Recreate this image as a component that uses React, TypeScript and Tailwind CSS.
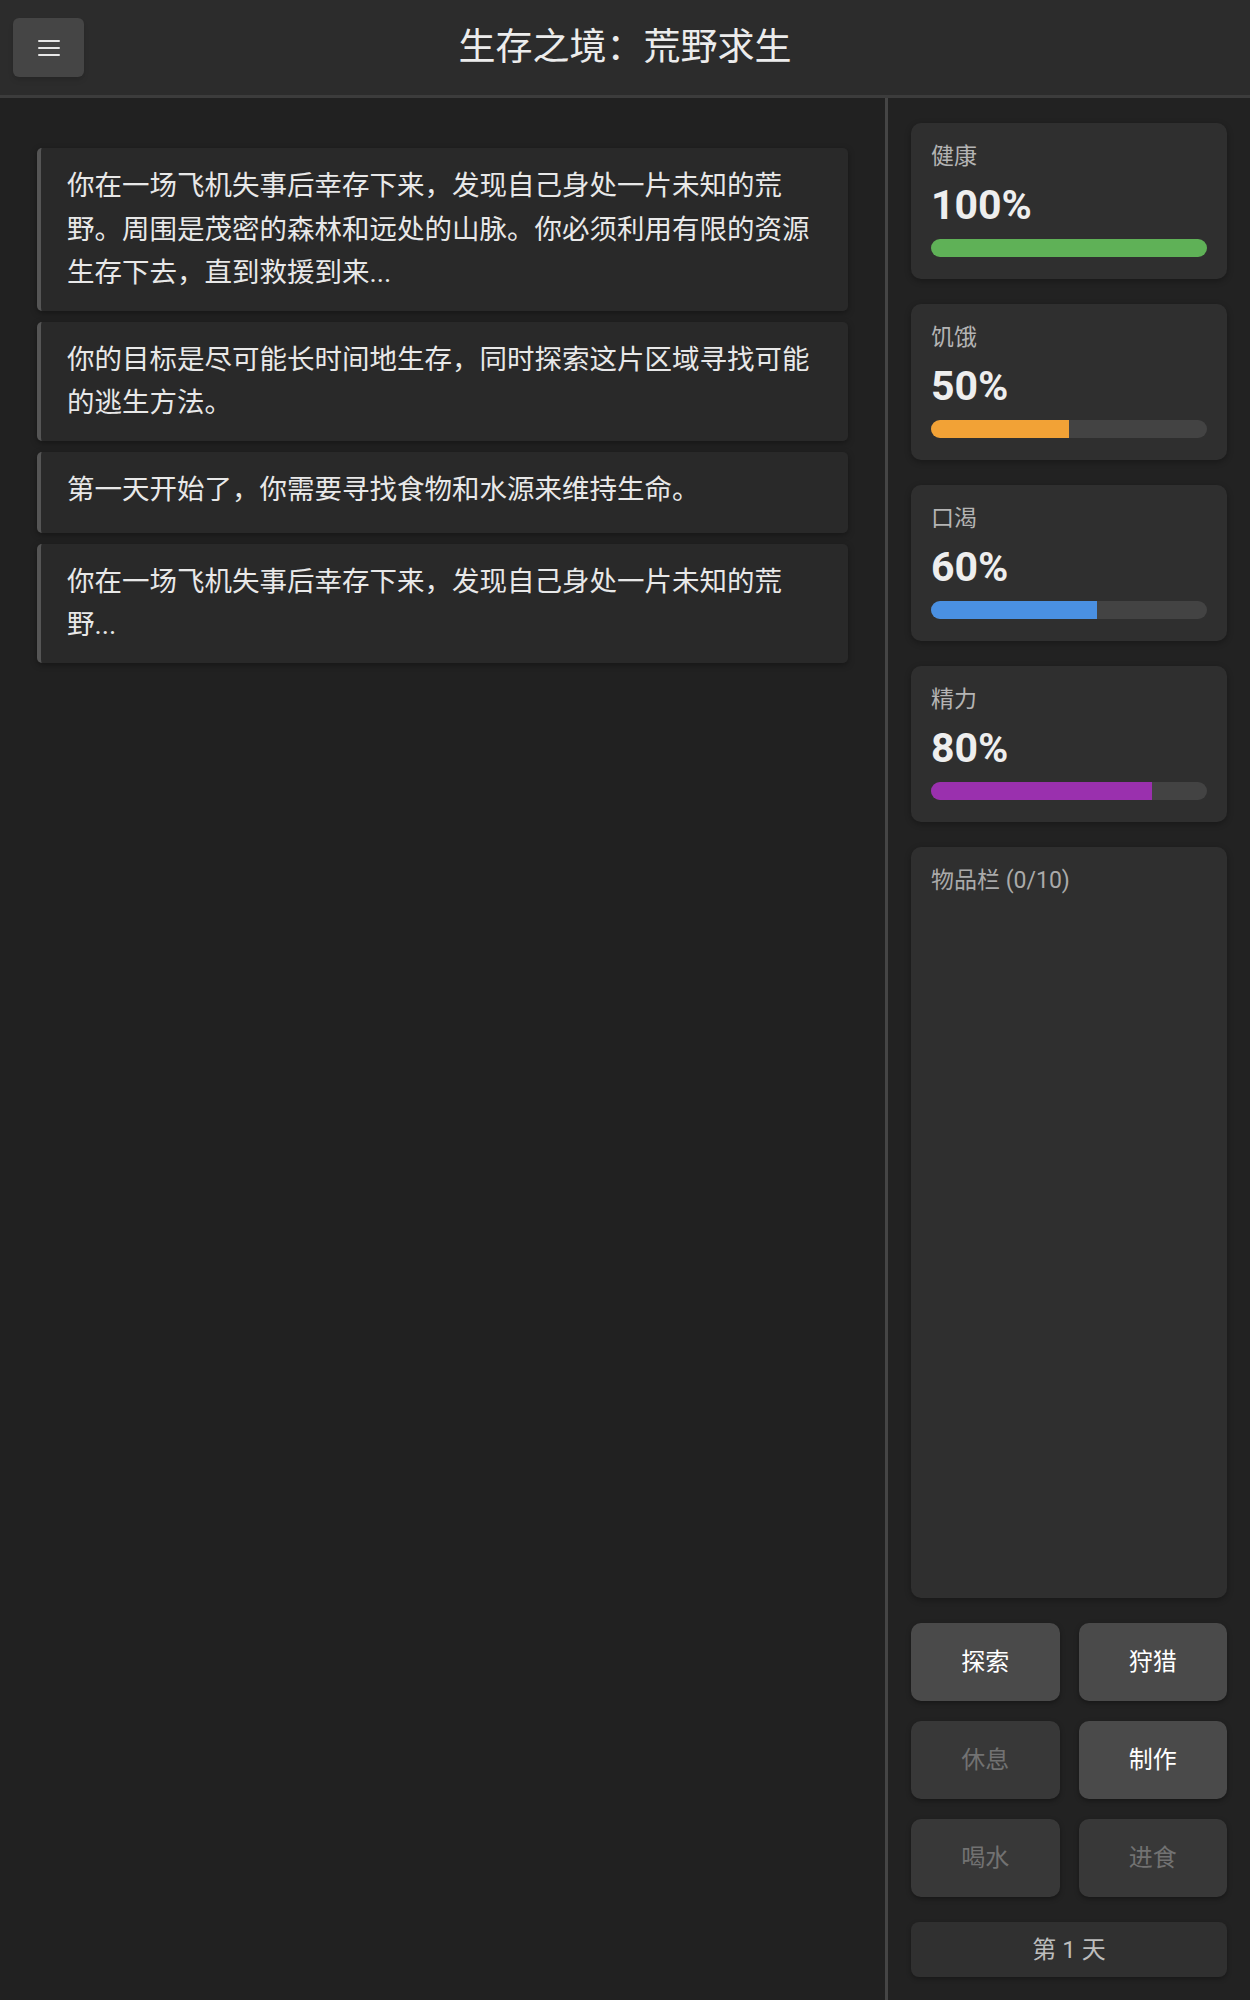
import React from "react";

const stats = [
  { label: "健康", value: 100, color: "bg-[#5fb157]" },
  { label: "饥饿", value: 50, color: "bg-[#f2a236]" },
  { label: "口渴", value: 60, color: "bg-[#4a90e2]" },
  { label: "精力", value: 80, color: "bg-[#9a30ae]" },
];

const messages = [
  "你在一场飞机失事后幸存下来，发现自己身处一片未知的荒野。周围是茂密的森林和远处的山脉。你必须利用有限的资源生存下去，直到救援到来...",
  "你的目标是尽可能长时间地生存，同时探索这片区域寻找可能的逃生方法。",
  "第一天开始了，你需要寻找食物和水源来维持生命。",
  "你在一场飞机失事后幸存下来，发现自己身处一片未知的荒野...",
];

const actions = [
  { label: "探索", enabled: true },
  { label: "狩猎", enabled: true },
  { label: "休息", enabled: false },
  { label: "制作", enabled: true },
  { label: "喝水", enabled: false },
  { label: "进食", enabled: false },
];

export default function App() {
  return (
    <div className="flex h-screen flex-col bg-[#212121] font-['Roboto','Noto_Sans_CJK_SC',sans-serif] text-[#e6e6e6]">
      {/* header */}
      <header className="grid h-[98px] shrink-0 grid-cols-[1fr_auto_1fr] items-center border-b-[3px] border-[#3c3c3c] bg-[#2c2c2c] px-[13px]">
        <button className="flex h-[59px] w-[71px] items-center justify-center rounded-md bg-[#454545] shadow-md">
          <svg width="22" height="18" viewBox="0 0 22 18">
            <path d="M1 2h20M1 9h20M1 16h20" stroke="#e8e8e8" strokeWidth="2" strokeLinecap="round" />
          </svg>
        </button>
        <h1 className="text-[37px] leading-none font-normal text-[#ececec]">
          生存之境：荒野求生
        </h1>
        <div />
      </header>

      <div className="flex min-h-0 flex-1">
        {/* story log */}
        <main className="flex-1 border-r-[3px] border-[#454545] px-[37px] pt-[50px]">
          <div className="flex flex-col gap-[11px]">
            {messages.map((m, i) => (
              <div
                key={i}
                className="min-h-[81px] rounded-[5px] border-l-4 border-[#555] bg-[#292929] py-[16px] pr-[26px] pl-[26px] text-[27.5px] leading-[43.5px] text-[#e8e8e8] shadow-[0_2px_6px_rgba(0,0,0,0.35)]"
              >
                {m}
              </div>
            ))}
          </div>
        </main>

        {/* sidebar */}
        <aside className="flex w-[362px] shrink-0 flex-col gap-[25px] bg-[#222222] px-[23px] pt-[25px] pb-[23px]">
          {stats.map((s) => (
            <div key={s.label} className="h-[156px] rounded-[10px] bg-[#2f2f2f] p-[20px] shadow-[0_2px_6px_rgba(0,0,0,0.3)]">
              <div className="text-[23px] leading-[28px] text-[#b4b4b4]">{s.label}</div>
              <div className="mt-[11px] text-[41px] leading-[47px] font-bold text-[#eeeeee]">{s.value}%</div>
              <div className="mt-[10px] h-[18px] overflow-hidden rounded-full bg-[#434343]">
                <div className={`h-full ${s.color}`} style={{ width: `${s.value}%` }} />
              </div>
            </div>
          ))}

          <div className="min-h-0 flex-1 rounded-[10px] bg-[#2f2f2f] px-[20px] pt-[20px] shadow-[0_2px_6px_rgba(0,0,0,0.3)]">
            <div className="text-[23px] leading-[28px] text-[#aaaaaa]">物品栏 (0/10)</div>
          </div>

          <div className="grid grid-cols-2 gap-x-[19px] gap-y-[20px]">
            {actions.map((a) => (
              <button
                key={a.label}
                className={
                  a.enabled
                    ? "h-[78px] rounded-[10px] bg-[#4a4a4a] text-[24px] text-white shadow-[0_2px_5px_rgba(0,0,0,0.35)]"
                    : "h-[78px] rounded-[10px] bg-[#383838] text-[24px] text-[#727272] shadow-[0_2px_5px_rgba(0,0,0,0.35)]"
                }
              >
                {a.label}
              </button>
            ))}
          </div>

          <div className="flex h-[55px] items-center justify-center rounded-[8px] bg-[#303030] text-[24px] text-[#bdbdbd] shadow-[0_2px_5px_rgba(0,0,0,0.3)]">
            第 1 天
          </div>
        </aside>
      </div>
    </div>
  );
}
